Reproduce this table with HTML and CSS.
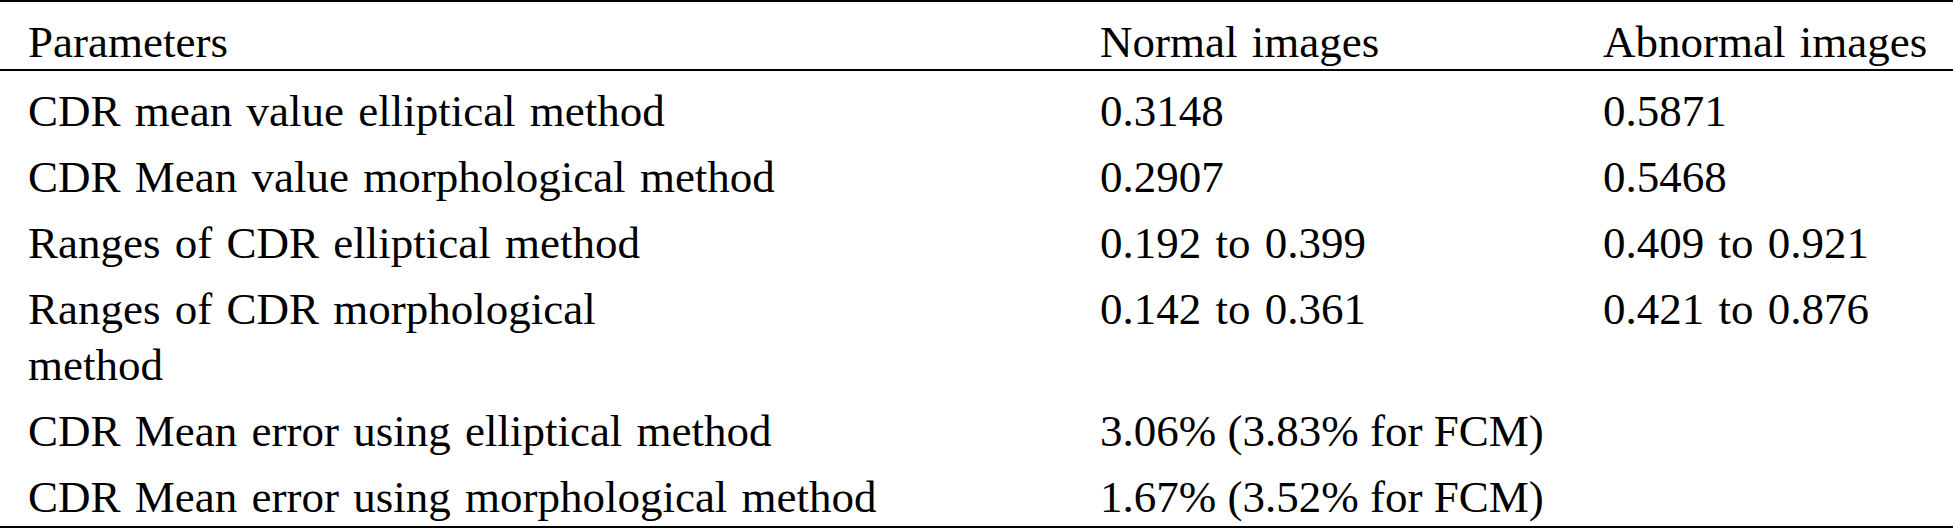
FILE: index.html
```html
<!DOCTYPE html>
<html lang="en">
<head>
<meta charset="utf-8">
<title>CDR parameters</title>
<link rel="stylesheet" href="styles.css">
</head>
<body>
<table class="cdr-table">
  <colgroup>
    <col class="col-param">
    <col class="col-normal">
    <col class="col-abnormal">
  </colgroup>
  <thead>
    <tr>
      <th>Parameters</th>
      <th>Normal images</th>
      <th>Abnormal images</th>
    </tr>
  </thead>
  <tbody>
    <tr class="first">
      <td>CDR mean value elliptical method</td>
      <td>0.3148</td>
      <td>0.5871</td>
    </tr>
    <tr>
      <td>CDR Mean value morphological method</td>
      <td>0.2907</td>
      <td>0.5468</td>
    </tr>
    <tr>
      <td>Ranges of CDR elliptical method</td>
      <td>0.192 to 0.399</td>
      <td>0.409 to 0.921</td>
    </tr>
    <tr>
      <td>Ranges of CDR morphological<br>method</td>
      <td>0.142 to 0.361</td>
      <td>0.421 to 0.876</td>
    </tr>
    <tr>
      <td>CDR Mean error using elliptical method</td>
      <td class="error" colspan="2">3.06% (3.83% for FCM)</td>
    </tr>
    <tr class="last">
      <td>CDR Mean error using morphological method</td>
      <td class="error" colspan="2">1.67% (3.52% for FCM)</td>
    </tr>
  </tbody>
</table>
</body>
</html>
```

FILE: styles.css
```css
html, body {
  margin: 0;
  padding: 0;
  background: #ffffff;
}

.cdr-table {
  width: 1953px;
  table-layout: fixed;
  border-collapse: separate;
  border-spacing: 0;
  border-top: 2px solid #000;
  border-bottom: 2px solid #000;
  font-family: "Liberation Serif", "Times New Roman", serif;
  font-size: 45px;
  word-spacing: 3px;
  color: #000;
}

.col-param { width: 1072px; }
.col-normal { width: 503px; }
.col-abnormal { width: 378px; }

.cdr-table th,
.cdr-table td {
  text-align: left;
  vertical-align: top;
  font-weight: normal;
  padding: 7px 0 3px 28px;
  line-height: 56px;
  white-space: nowrap;
}

.cdr-table th {
  padding-top: 13px;
  padding-bottom: 0;
  line-height: 54px;
  border-bottom: 2px solid #000;
}

.cdr-table tr.first td {
  padding-top: 12px;
}

.cdr-table tr.last td {
  padding-bottom: 1px;
}

.cdr-table td.error {
  word-spacing: 0;
}
```
